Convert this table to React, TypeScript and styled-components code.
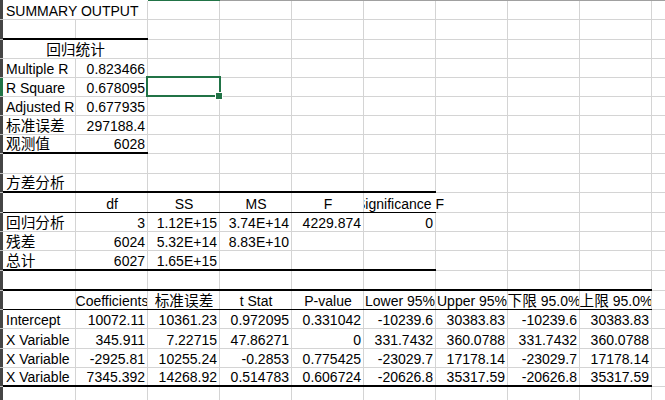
import React from 'react';
import styled, { createGlobalStyle, css } from 'styled-components';

const GlobalStyle = createGlobalStyle`
  html, body { margin: 0; padding: 0; background: #ffffff; overflow: hidden; }
  body { width: 665px; height: 400px; }
`;

const GRID = '#d4d4d4';
const GREEN = '#217346';
const COLS = [73, 72, 72, 72, 72, 72, 72, 72, 72, 72];

type Edge = 'grid' | 'thin' | 'thick';
type Align = 'left' | 'right' | 'center';

interface CellSpec {
  text?: string;
  align?: Align;
  span?: number;
  spill?: boolean;
  selected?: boolean;
}
interface SegSpec {
  edge: Edge;
  cells: CellSpec[];
}
interface RowSpec {
  h: number;
  active?: boolean;
  segs: SegSpec[];
}

const Sheet = styled.div`
  display: flex;
  flex-direction: column;
  width: 724px;
  font-family: "Liberation Sans", "Noto Sans CJK SC", sans-serif;
  font-size: 14px;
  color: #000;
`;

const HeaderEdge = styled.div`
  display: flex;
  height: 1px;
`;

const EdgePiece = styled.div<{ $w: number; $color: string }>`
  flex: none;
  width: ${(p) => p.$w}px;
  background: ${(p) => p.$color};
`;

const Row = styled.div<{ $h: number }>`
  display: flex;
  height: ${(p) => p.$h}px;
`;

const RowHead = styled.div<{ $active?: boolean }>`
  flex: none;
  width: 3px;
  box-sizing: border-box;
  background: ${(p) => (p.$active ? GREEN : '#454545')};
  border-bottom: 1px solid #bdbdbd;
`;

const edgeStyle = (e: Edge) =>
  e === 'thick' ? '2px solid #000' : e === 'thin' ? '1px solid #000' : `1px solid ${GRID}`;

const Segment = styled.div<{ $edge: Edge }>`
  display: flex;
  flex: none;
  box-sizing: border-box;
  height: 100%;
  border-bottom: ${(p) => edgeStyle(p.$edge)};
`;

const Cell = styled.div<{ $w: number; $align: Align; $spill?: boolean; $selected?: boolean }>`
  position: relative;
  flex: none;
  box-sizing: border-box;
  width: ${(p) => p.$w}px;
  display: flex;
  align-items: flex-end;
  justify-content: ${(p) =>
    p.$align === 'left' ? 'flex-start' : p.$align === 'right' ? 'flex-end' : 'center'};
  padding: 0 2px 0 3px;
  border-right: 1px solid ${(p) => (p.$spill ? 'transparent' : GRID)};
  white-space: pre;
  overflow-x: ${(p) => (p.$spill || p.$selected ? 'visible' : 'clip')};
  overflow-y: visible;
  ${(p) =>
    p.$spill &&
    css`
      clip-path: inset(-10px -300px -10px 0);
    `}
`;

const Value = styled.span`
  flex: none;
  line-height: 15px;
  white-space: pre;
`;

const Cjk = styled.span`
  font-family: "Noto Sans CJK SC", sans-serif;
  font-size: 14.67px;
  line-height: 1;
`;

const Selection = styled.div`
  position: absolute;
  left: -2px;
  top: -2px;
  width: 75px;
  height: 21px;
  box-sizing: border-box;
  border: 2px solid ${GREEN};
  z-index: 2;
  pointer-events: none;
`;

const FillHandle = styled.div`
  position: absolute;
  left: 68px;
  top: 15px;
  width: 6px;
  height: 6px;
  background: ${GREEN};
  box-shadow: 0 0 0 1px #fff;
  z-index: 3;
`;

const CJK_RE = /([\u3400-\u9fff]+)/;
function renderText(s: string) {
  return s.split(CJK_RE).map((part, i) =>
    CJK_RE.test(part) ? <Cjk key={i}>{part}</Cjk> : <React.Fragment key={i}>{part}</React.Fragment>
  );
}

const L = (text: string, extra: Partial<CellSpec> = {}): CellSpec => ({ text, align: 'left', ...extra });
const N = (text: string): CellSpec => ({ text, align: 'right' });
const C = (text: string, extra: Partial<CellSpec> = {}): CellSpec => ({ text, align: 'center', ...extra });
const blank = (n: number): CellSpec[] => Array.from({ length: n }, () => ({}));
const grid = (cells: CellSpec[]): SegSpec => ({ edge: 'grid', cells });
const thin = (cells: CellSpec[]): SegSpec => ({ edge: 'thin', cells });
const thick = (cells: CellSpec[]): SegSpec => ({ edge: 'thick', cells });

const rows: RowSpec[] = [
  { h: 19, segs: [grid([L('SUMMARY OUTPUT', { spill: true }), ...blank(9)])] },
  { h: 20, segs: [thick(blank(2)), grid(blank(8))] },
  { h: 19, segs: [grid([C('回归统计', { span: 2 }), ...blank(8)])] },
  { h: 19, segs: [grid([L('Multiple R'), N('0.823466'), ...blank(8)])] },
  { h: 19, active: true, segs: [grid([L('R Square'), N('0.678095'), { selected: true }, ...blank(7)])] },
  { h: 19, segs: [grid([L('Adjusted R'), N('0.677935'), ...blank(8)])] },
  { h: 19, segs: [grid([L('标准误差'), N('297188.4'), ...blank(8)])] },
  { h: 19, segs: [thick([L('观测值'), N('6028')]), grid(blank(8))] },
  { h: 20, segs: [grid(blank(10))] },
  { h: 19, segs: [thick([L('方差分析'), ...blank(5)]), grid(blank(4))] },
  {
    h: 20,
    segs: [
      thin([{}, C('df'), C('SS'), C('MS'), C('F'), C('Significance F', { spill: true })]),
      grid(blank(4)),
    ],
  },
  {
    h: 19,
    segs: [grid([L('回归分析'), N('3'), N('1.12E+15'), N('3.74E+14'), N('4229.874'), N('0'), ...blank(4)])],
  },
  { h: 19, segs: [grid([L('残差'), N('6024'), N('5.32E+14'), N('8.83E+10'), ...blank(6)])] },
  { h: 20, segs: [thick([L('总计'), N('6027'), N('1.65E+15'), ...blank(3)]), grid(blank(4))] },
  { h: 20, segs: [thick(blank(9)), grid(blank(1))] },
  {
    h: 19,
    segs: [
      thin([
        {},
        C('Coefficients'),
        C('标准误差'),
        C('t Stat'),
        C('P-value'),
        C('Lower 95%'),
        C('Upper 95%'),
        C('下限 95.0%'),
        C('上限 95.0%'),
      ]),
      grid(blank(1)),
    ],
  },
  {
    h: 19,
    segs: [
      grid([
        L('Intercept'),
        N('10072.11'),
        N('10361.23'),
        N('0.972095'),
        N('0.331042'),
        N('-10239.6'),
        N('30383.83'),
        N('-10239.6'),
        N('30383.83'),
        {},
      ]),
    ],
  },
  {
    h: 20,
    segs: [
      grid([
        L('X Variable'),
        N('345.911'),
        N('7.22715'),
        N('47.86271'),
        N('0'),
        N('331.7432'),
        N('360.0788'),
        N('331.7432'),
        N('360.0788'),
        {},
      ]),
    ],
  },
  {
    h: 19,
    segs: [
      grid([
        L('X Variable'),
        N('-2925.81'),
        N('10255.24'),
        N('-0.2853'),
        N('0.775425'),
        N('-23029.7'),
        N('17178.14'),
        N('-23029.7'),
        N('17178.14'),
        {},
      ]),
    ],
  },
  {
    h: 19,
    segs: [
      thick([
        L('X Variable'),
        N('7345.392'),
        N('14268.92'),
        N('0.514783'),
        N('0.606724'),
        N('-20626.8'),
        N('35317.59'),
        N('-20626.8'),
        N('35317.59'),
      ]),
      grid(blank(1)),
    ],
  },
  { h: 19, segs: [grid(blank(10))] },
];

function SheetRow({ spec }: { spec: RowSpec }) {
  let col = 0;
  return (
    <Row $h={spec.h}>
      <RowHead $active={spec.active} />
      {spec.segs.map((seg, si) => (
        <Segment key={si} $edge={seg.edge}>
          {seg.cells.map((c, ci) => {
            const span = c.span ?? 1;
            const w = COLS.slice(col, col + span).reduce((a, b) => a + b, 0);
            col += span;
            return (
              <Cell key={ci} $w={w} $align={c.align ?? 'left'} $spill={c.spill} $selected={c.selected}>
                {c.text && <Value>{renderText(c.text)}</Value>}
                {c.selected && (
                  <>
                    <Selection />
                    <FillHandle />
                  </>
                )}
              </Cell>
            );
          })}
        </Segment>
      ))}
    </Row>
  );
}

export default function App() {
  return (
    <>
      <GlobalStyle />
      <Sheet>
        <HeaderEdge>
          <EdgePiece $w={3} $color="#454545" />
          <EdgePiece $w={145} $color="#ffffff" />
          <EdgePiece $w={72} $color={GREEN} />
          <EdgePiece $w={504} $color="#a0a0a0" />
        </HeaderEdge>
        {rows.map((r, i) => (
          <SheetRow key={i} spec={r} />
        ))}
      </Sheet>
    </>
  );
}
